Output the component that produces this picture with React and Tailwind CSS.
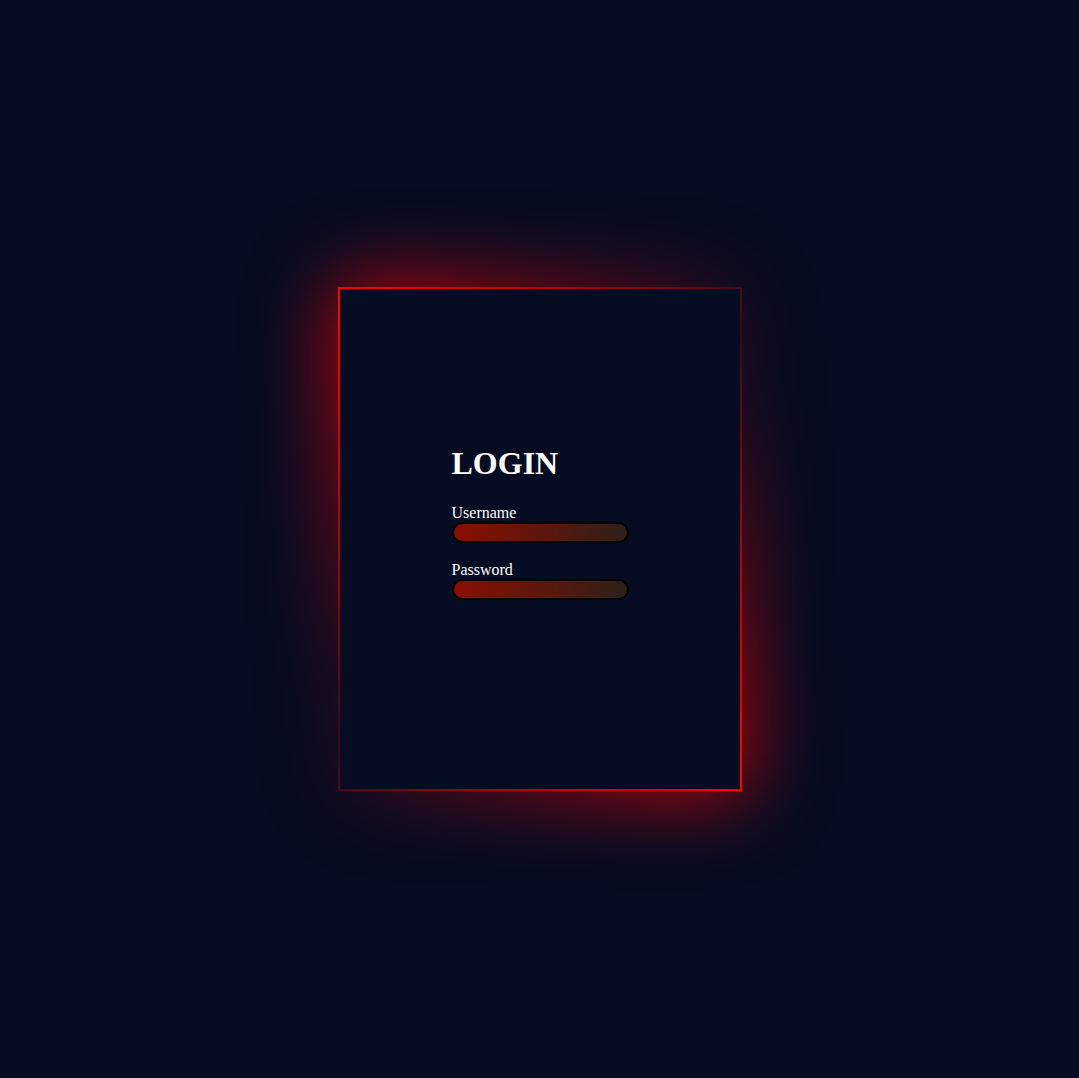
import React from 'react';

function Field({ label, type, className }) {
  return (
    <div className={className}>
      <label className="block text-[16px] leading-[19px] text-white">{label}</label>
      <input
        type={type}
        className="block w-[177px] h-[21px] rounded-full border-2 border-black bg-[linear-gradient(90deg,#8c0e00,#2e2019)] outline-none"
      />
    </div>
  );
}

export default function App() {
  return (
    <div className="min-h-screen bg-[#060c21] flex items-center justify-center font-['Liberation_Serif',serif]">
      <div className="relative w-[404px] h-[504px]">
        {/* glow behind the card */}
        <div className="absolute inset-0 bg-[linear-gradient(135deg,#ff0000,rgba(255,0,0,0.08),#ff0000)] blur-[42px]" />
        <div className="relative h-full p-[2px] bg-[linear-gradient(135deg,#ff0000,rgba(255,0,0,0.15),#ff0000)]">
          <div className="h-full bg-[#060c21] pl-[112px] pt-[156px]">
            <h1 className="text-[32px] leading-[37px] font-bold text-white">LOGIN</h1>
            <form className="mt-[21px]">
              <Field label="Username" type="text" />
              <Field label="Password" type="password" className="mt-[17px]" />
            </form>
          </div>
        </div>
      </div>
    </div>
  );
}
